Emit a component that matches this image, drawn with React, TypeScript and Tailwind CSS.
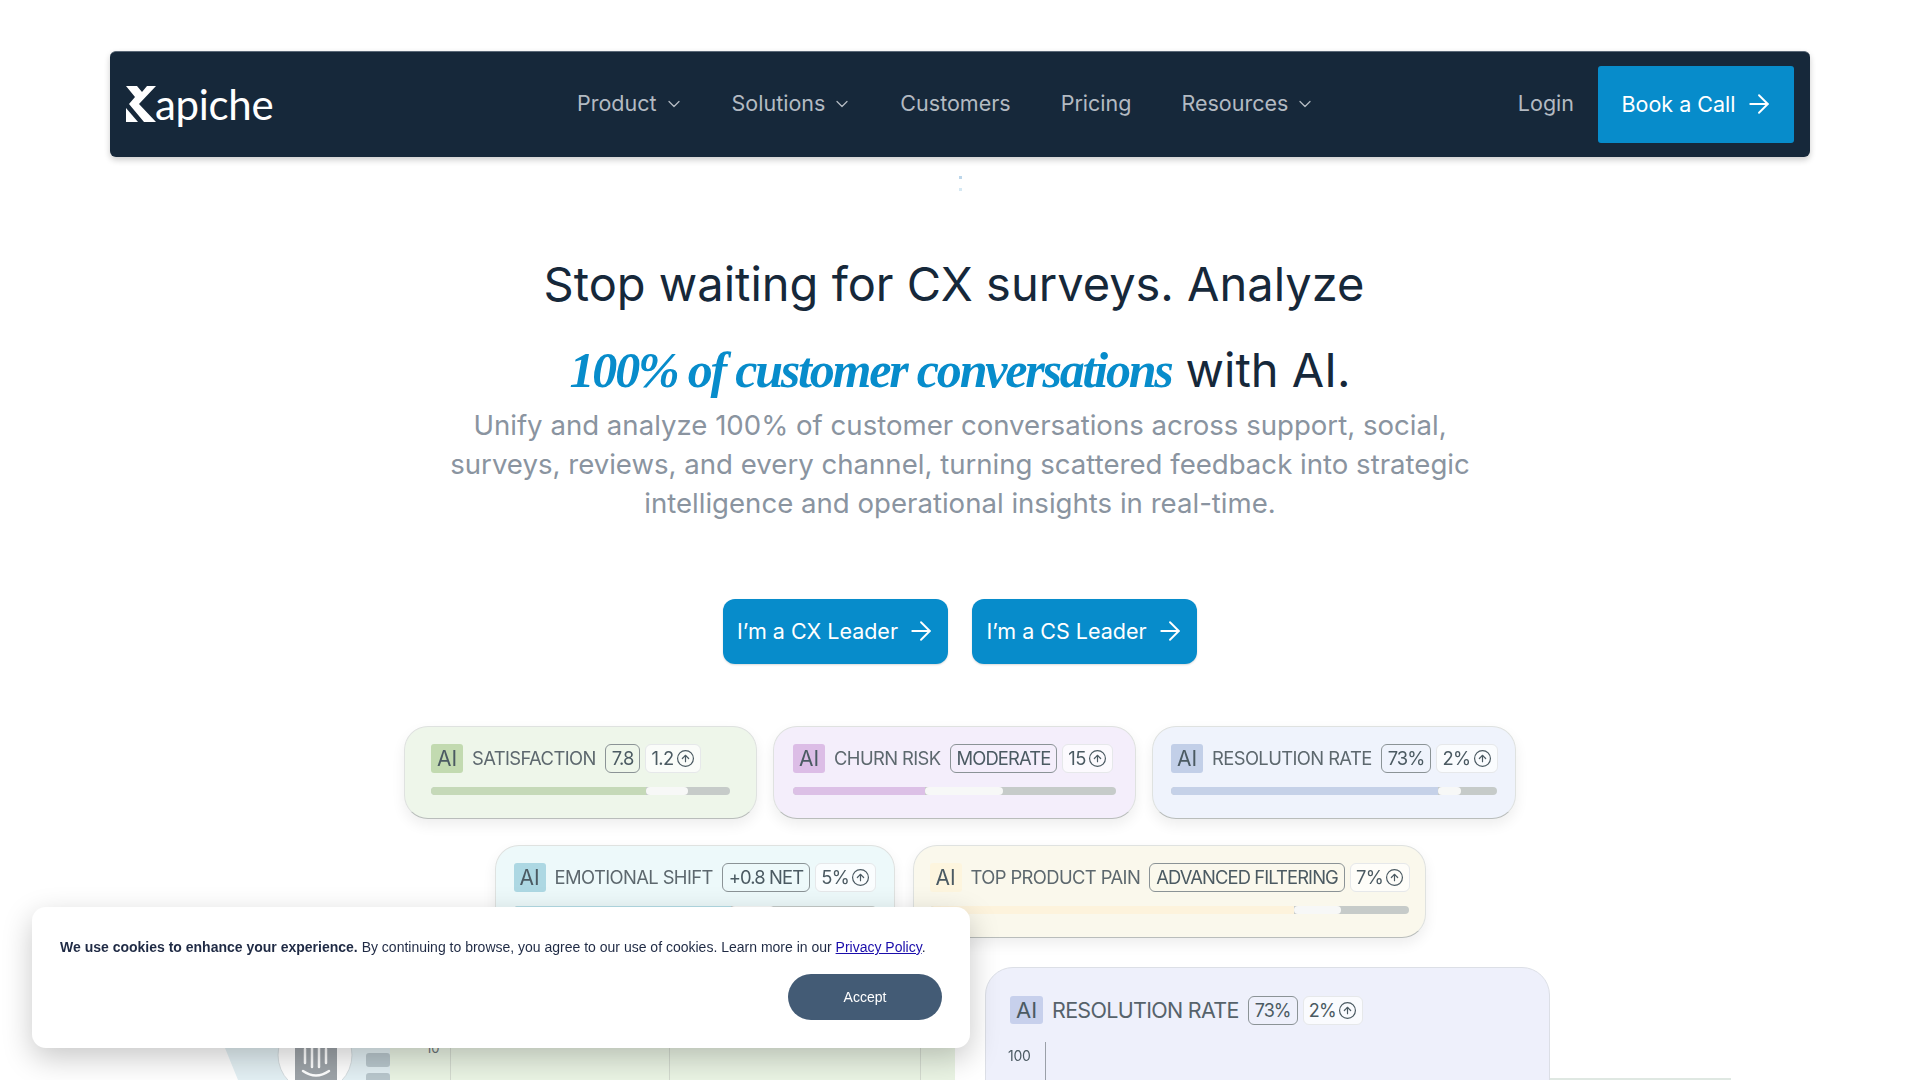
import React from 'react';
import { ArrowRight, ChevronDown, CircleArrowUp } from 'lucide-react';

const navItems = [
  { label: 'Product', caret: true },
  { label: 'Solutions', caret: true },
  { label: 'Customers', caret: false },
  { label: 'Pricing', caret: false },
  { label: 'Resources', caret: true },
];

interface Metric {
  title: string;
  value: string;
  delta: string;
  card: string;
  badge: string;
  fill: string;
  fillPct: number;
  thumbPct: number;
}

const ValuePill: React.FC<{ children: React.ReactNode; className?: string }> = ({ children, className }) => (
  <span className={`flex items-center shrink-0 h-[29px] px-[6px] rounded-[6px] border border-[#8b9396] tracking-[-0.9px] whitespace-nowrap ${className ?? ''}`}>
    {children}
  </span>
);

const DeltaPill: React.FC<{ children: React.ReactNode; className?: string }> = ({ children, className }) => (
  <span className={`flex items-center shrink-0 gap-[2px] h-[29px] px-[5px] ml-[5px] rounded-[6px] border border-[#e6e8ea] bg-white/70 whitespace-nowrap ${className ?? ''}`}>
    {children}
    <CircleArrowUp size={19} strokeWidth={1.5} />
  </span>
);

const MetricCard: React.FC<{ m: Metric; className: string }> = ({ m, className }) => (
  <div className={`h-[93px] rounded-[24px] border border-[#dfe2e0] border-b-[#b9bdbb] shadow-[0_6px_14px_rgba(0,0,0,0.07)] ${m.card} ${className}`}>
    <div className="flex items-center text-[18.4px] tracking-[-0.6px] text-[#4b5a62]">
      <span className={`flex items-center justify-center shrink-0 w-[32px] h-[29px] rounded-[3px] text-[21px] tracking-normal ${m.badge}`}>AI</span>
      <span className="ml-[9px] mr-[9px] text-[#5d686e] whitespace-nowrap">{m.title}</span>
      <ValuePill>{m.value}</ValuePill>
      <DeltaPill>{m.delta}</DeltaPill>
    </div>
    <div className="mt-[14px] flex h-[8px] rounded-full overflow-hidden bg-[#c6cbc9]">
      <div className={m.fill} style={{ width: `${m.fillPct}%` }} />
      <div className="bg-[#f7f8f7] rounded-full" style={{ width: `${m.thumbPct}%` }} />
    </div>
  </div>
);

const rowOne: (Metric & { box: string })[] = [
  { title: 'SATISFACTION', value: '7.8', delta: '1.2', card: 'bg-[#eef6ea]', badge: 'bg-[#c2dab0]', fill: 'bg-[#c5d9b8]', fillPct: 72, thumbPct: 14, box: 'w-[353px] pt-[17px] px-[26px]' },
  { title: 'CHURN RISK', value: 'MODERATE', delta: '15', card: 'bg-[#f4eefb]', badge: 'bg-[#dcbde6]', fill: 'bg-[#dcc0e6]', fillPct: 41, thumbPct: 24, box: 'w-[363px] pt-[17px] px-[19px]' },
  { title: 'RESOLUTION RATE', value: '73%', delta: '2%', card: 'bg-[#eff3fc]', badge: 'bg-[#c2cfe8]', fill: 'bg-[#c5d1e8]', fillPct: 82, thumbPct: 7, box: 'w-[364px] pt-[17px] px-[18px]' },
];

const rowTwo: (Metric & { box: string })[] = [
  { title: 'EMOTIONAL SHIFT', value: '+0.8 NET', delta: '5%', card: 'bg-[#edf9fa]', badge: 'bg-[#add8e3]', fill: 'bg-[#b5dde6]', fillPct: 60, thumbPct: 12, box: 'w-[400px] pt-[17px] px-[18px]' },
  { title: 'TOP PRODUCT PAIN', value: 'ADVANCED FILTERING', delta: '7%', card: 'bg-[#faf8ec]', badge: 'bg-[#fdf5de]', fill: 'bg-[#fdf3dc]', fillPct: 76, thumbPct: 10, box: 'w-[513px] pt-[17px] px-[16px]' },
];

const CtaButton: React.FC<{ label: string }> = ({ label }) => (
  <a className="flex items-center justify-center gap-[8px] w-[225px] h-[65px] pl-[2px] pb-[1px] rounded-[12px] bg-[#078ccb] text-white text-[21.5px] shadow-[0_1px_2px_rgba(0,0,0,0.15)]">
    {label}
    <ArrowRight size={30} strokeWidth={1.5} />
  </a>
);

export default function App() {
  return (
    <div className="relative h-[1080px] overflow-hidden bg-white font-['Inter',sans-serif] text-[#16283a]">
      {/* navbar */}
      <div className="pt-[51px] px-[110px]">
        <header className="flex items-center h-[106px] pl-[16px] pr-[16px] rounded-[6px] bg-[#16283a] border-t border-[#5a6877] shadow-[0_3px_6px_rgba(0,0,0,0.2)]">
          <div className="flex items-center w-[451px] text-white pb-[2px]">
            <svg width="30" height="36" viewBox="0 0 30 36" fill="white">
              <path d="M0 0H11L16 6L21 0H30L13 18L30 36H18L3 18L9 11Z" />
              <path d="M0 22L12 36H0Z" />
            </svg>
            <span className="font-['Lato',sans-serif] text-[42px] leading-none tracking-[-0.3px] -ml-[1px]">apiche</span>
          </div>
          <nav className="flex items-center pb-[2px] text-[21.5px] text-[#b3bac2]">
            {navItems.map((item) => (
              <a key={item.label} className="flex items-center mr-[50px] whitespace-nowrap">
                {item.label}
                {item.caret && <ChevronDown size={20} strokeWidth={1.5} className="ml-[7px] -mr-[2px]" />}
              </a>
            ))}
          </nav>
          <a className="ml-auto mr-[24px] pb-[2px] text-[21.5px] text-[#b3bac2]">Login</a>
          <a className="flex items-center justify-center gap-[8px] w-[196px] h-[77px] pl-[3px] pb-[1px] rounded-[3px] bg-[#078ccb] text-white text-[21.5px]">
            Book a Call
            <ArrowRight size={30} strokeWidth={1.5} />
          </a>
        </header>
      </div>

      <div className="flex flex-col items-center gap-[9px] mt-[19px]">
        <span className="w-[3px] h-[3px] bg-[#bcd6ea]" />
        <span className="w-[3px] h-[3px] bg-[#d5e8f3]" />
      </div>

      {/* hero */}
      <section className="flex flex-col items-center mt-[63px]">
        <h1 className="text-[47px] leading-[60px] -ml-[12px] whitespace-nowrap">Stop waiting for CX surveys. Analyze</h1>
        <div className="flex items-baseline mt-[24px] h-[64px] whitespace-nowrap">
          <span className="font-['Liberation_Serif',serif] italic font-bold text-[50px] leading-[64px] text-[#078ccb] tracking-[-2.2px]">100% of customer conversations</span>
          <span className="text-[47px] leading-[64px] ml-[14px]">with AI.</span>
        </div>
        <p className="w-[1040px] mt-[4px] text-center text-[27.6px] leading-[39px] text-[#8a94a0]">
          Unify and analyze 100% of customer conversations across support, social, surveys, reviews, and every channel, turning scattered feedback into strategic intelligence and operational insights in real-time.
        </p>
        <div className="flex gap-[24px] mt-[76px]">
          <CtaButton label="I’m a CX Leader" />
          <CtaButton label="I’m a CS Leader" />
        </div>
      </section>

      {/* metric cards */}
      <section className="mt-[62px] blur-[0.5px]">
        <div className="flex justify-center gap-[16px]">
          {rowOne.map((m) => (
            <MetricCard key={m.title} m={m} className={m.box} />
          ))}
        </div>
        <div className="flex justify-center gap-[18px] mt-[26px]">
          {rowTwo.map((m) => (
            <MetricCard key={m.title} m={m} className={m.box} />
          ))}
        </div>

        <div className="flex items-start mt-[29px] ml-[225px]">
          {/* integration node */}
          <svg width="165" height="130" viewBox="0 0 165 130" className="shrink-0">
            <path d="M0 81 L13 113 V130 H165 V30 H0 Z" fill="#e3f0f4" />
            <circle cx="90" cy="88" r="37" fill="#ffffff" stroke="#d5dde0" />
            <rect x="70" y="58" width="42" height="72" fill="#9da3a8" />
            <g stroke="#ffffff" strokeWidth="2.5" strokeLinecap="round">
              <path d="M80 82V96M87 80V100M94 80V100M101 82V96" />
              <path d="M78 104Q91 113 104 104" fill="none" />
            </g>
            <rect x="141" y="86" width="24" height="14" rx="3" fill="#b9c7cd" />
            <rect x="141" y="106" width="24" height="14" rx="3" fill="#b9c7cd" />
          </svg>
          <div className="relative w-[565px] h-[130px] bg-[#eaf4e4] shrink-0">
            <span className="absolute left-[36px] top-[72px] text-[13px] text-[#6b7378]">10</span>
            <div className="absolute inset-y-0 left-[60px] w-px bg-[#d3dacf]" />
            <div className="absolute inset-y-0 left-[279px] w-px bg-[#d3dacf]" />
            <div className="absolute inset-y-0 left-[530px] w-px bg-[#d3dacf]" />
          </div>
          <div className="ml-[30px] w-[565px] h-[130px] shrink-0 rounded-t-[28px] bg-[#eef0fb] border border-[#dcdfe6] pt-[26px] pl-[24px]">
            <div className="flex items-center text-[21.5px] tracking-[-0.7px] text-[#4b5a62]">
              <span className="flex items-center justify-center shrink-0 w-[33px] h-[28px] rounded-[3px] bg-[#c7d0ec] text-[22px] tracking-normal">AI</span>
              <span className="ml-[9px] mr-[9px] whitespace-nowrap text-[#56626a]">RESOLUTION RATE</span>
              <ValuePill className="text-[18px]">73%</ValuePill>
              <DeltaPill className="text-[18px]">2%</DeltaPill>
            </div>
            <div className="flex mt-[16px] -ml-[2px]">
              <span className="text-[14px] tracking-[-0.3px] leading-[28px] text-[#4b5a62]">100</span>
              <span className="ml-[15px] w-px h-[40px] bg-[#9aa0a8]" />
            </div>
          </div>
          <div className="mt-[111px] w-[181px] h-[2px] bg-[#dfe8e2] shrink-0" />
        </div>
      </section>

      {/* cookie banner */}
      <div className="fixed left-[32px] top-[907px] w-[938px] h-[141px] rounded-[14px] bg-white shadow-[0_10px_30px_rgba(0,0,0,0.22)] font-['Liberation_Sans',sans-serif] text-[#1f2a44]">
        <p className="pl-[28px] pt-[32px] text-[14px] leading-[16px] whitespace-nowrap">
          <strong>We use cookies to enhance your experience.</strong> By continuing to browse, you agree to our use of cookies. Learn more in our{' '}
          <a className="underline text-[#1a0dab]">Privacy Policy</a>.
        </p>
        <div className="flex justify-end pr-[28px] mt-[19px]">
          <button className="w-[154px] h-[46px] rounded-full bg-[#435b75] text-white text-[14px]">Accept</button>
        </div>
      </div>
    </div>
  );
}
